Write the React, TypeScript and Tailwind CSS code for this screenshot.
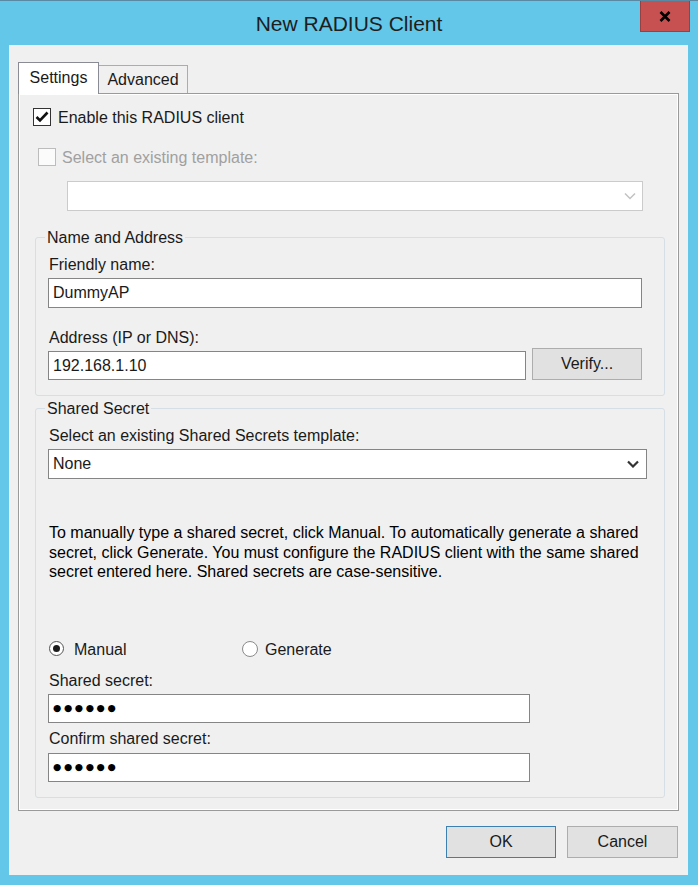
import type { ReactNode } from "react";

function Chevron({ color, bold }: { color: string; bold?: boolean }) {
  return (
    <svg width="12" height="8" viewBox="0 0 12 8">
      <path d="M1 1.5 L6 6.5 L11 1.5" fill="none" stroke={color} strokeWidth={bold ? 2.2 : 1.5} />
    </svg>
  );
}

function TextBox({ value, w, h = "h-[29px]" }: { value?: ReactNode; w: string; h?: string }) {
  return (
    <div className={`${w} ${h} bg-white border border-[#858585] flex items-center pl-[4px]`}>{value}</div>
  );
}

function Label({ children, mt }: { children: ReactNode; mt: string }) {
  return <div className={`${mt} h-[20px] leading-[20px] pl-[1px] pt-[1px]`}>{children}</div>;
}

function Dots() {
  return (
    <span className="font-['DejaVu_Sans',sans-serif] text-[9.5px] tracking-[2.6px] text-black">●●●●●●</span>
  );
}

function Group({ title, mt, children }: { title: string; mt: string; children: ReactNode }) {
  return (
    <fieldset className={`${mt} ml-[16px] mr-[13px] border border-[#d5dfe5] rounded-[3px] pl-[12px] pb-[15px]`}>
      <legend className="-ml-[3px] px-[2px] h-[20px] leading-[20px] pt-[1px]">{title}</legend>
      {children}
    </fieldset>
  );
}

function Button({ children, focused, w, h }: { children: ReactNode; focused?: boolean; w: string; h: string }) {
  return (
    <div
      className={`${w} ${h} bg-[#e1e1e1] border flex items-center justify-center ${
        focused ? "border-[#3c7fb1]" : "border-[#adadad]"
      }`}
    >
      {children}
    </div>
  );
}

export default function App() {
  return (
    <div className="w-[698px] h-[885px] bg-[#63c7e9] border-t border-[#5a8aa3] flex flex-col font-['Liberation_Sans',Arial,sans-serif] text-[16px] text-[#1a1a1a]">
      {/* title bar */}
      <div className="relative h-[44px] flex items-center justify-center">
        <span className="text-[21px] text-[#1e1e1e] leading-none">New RADIUS Client</span>
        <div className="absolute top-0 right-[8px] w-[50px] h-[31px] bg-[#c75050] border border-t-0 border-[#9b3f3f] flex items-center justify-center">
          <svg width="12" height="11" viewBox="0 0 12 11">
            <path d="M1.5 1 L10.5 10 M10.5 1 L1.5 10" stroke="#000" strokeWidth="2.6" />
          </svg>
        </div>
      </div>

      {/* client area */}
      <div className="ml-[9px] mr-[10px] h-[830px] bg-[#f0f0f0] flex flex-col">
        {/* tabs */}
        <div className="mt-[17px] ml-[9px] h-[32px] -mb-px flex items-end relative z-10">
          <div className="w-[81px] h-[32px] bg-white border border-b-0 border-[#898c95] flex items-center justify-center pb-[2px]">
            Settings
          </div>
          <div className="w-[89px] h-[28px] mb-[1px] bg-[#f0f0f0] border border-l-0 border-b-0 border-[#acacac] flex items-center justify-center pt-[1px]">
            Advanced
          </div>
        </div>

        {/* tab page */}
        <div className="ml-[9px] mr-[9px] h-[718px] border border-[#9a9a9a] shadow-[inset_1px_1px_0_#fff,inset_-1px_-1px_0_#fff] flex flex-col">
          <div className="mt-[14px] ml-[14px] h-[18px] flex items-center gap-[7px]">
            <div className="w-[18px] h-[18px] border border-[#333] bg-white flex items-center justify-center">
              <svg width="14" height="12" viewBox="0 0 14 12">
                <path d="M1.5 6 L5 9.5 L12.5 1.5" fill="none" stroke="#111" strokeWidth="2.6" />
              </svg>
            </div>
            <span className="pt-[2px]">Enable this RADIUS client</span>
          </div>

          <div className="mt-[22px] ml-[19px] h-[18px] flex items-center gap-[6px] text-[#a0a0a0]">
            <div className="w-[18px] h-[18px] border border-[#bcbcbc] bg-[#fbfbfb]" />
            <span className="pt-[2px]">Select an existing template:</span>
          </div>

          <div className="mt-[15px] ml-[48px] w-[576px] h-[30px] bg-white border border-[#cbcbcb] flex items-center justify-end pr-[6px]">
            <Chevron color="#c2c2c2" />
          </div>

          <Group title="Name and Address" mt="mt-[16px]">
            <Label mt="mt-[7px]">Friendly name:</Label>
            <div className="mt-[4px]">
              <TextBox value="DummyAP" w="w-[594px]" h="h-[30px]" />
            </div>
            <Label mt="mt-[19px]">Address (IP or DNS):</Label>
            <div className="mt-[1px] h-[32px] flex items-end gap-[6px]">
              <TextBox value="192.168.1.10" w="w-[478px]" />
              <Button w="w-[110px]" h="h-[32px]">
                Verify...
              </Button>
            </div>
          </Group>

          <Group title="Shared Secret" mt="mt-[2px]">
            <Label mt="mt-[7px]">Select an existing Shared Secrets template:</Label>
            <div className="mt-[4px] w-[599px] h-[30px] bg-white border border-[#858585] flex items-center justify-between pl-[4px] pr-[7px]">
              <span>None</span>
              <Chevron color="#333" bold />
            </div>
            <p className="mt-[44px] leading-[19.5px] text-black pl-[1px]">
              To manually type a shared secret, click Manual. To automatically generate a shared
              <br />
              secret, click Generate. You must configure the RADIUS client with the same shared
              <br />
              secret entered here. Shared secrets are case-sensitive.
            </p>
            <div className="mt-[57px] h-[20px] ml-[1px] flex items-center">
              <div className="w-[193px] flex items-center gap-[10px]">
                <div className="w-[15px] h-[15px] rounded-full border border-[#555] bg-white flex items-center justify-center">
                  <div className="w-[7px] h-[7px] rounded-full bg-[#1c1c1c]" />
                </div>
                <span className="pt-[2px]">Manual</span>
              </div>
              <div className="flex items-center gap-[7px]">
                <div className="w-[16px] h-[16px] rounded-full border border-[#8a8a8a] bg-white" />
                <span className="pt-[2px]">Generate</span>
              </div>
            </div>
            <Label mt="mt-[11px]">Shared secret:</Label>
            <div className="mt-[4px]">
              <TextBox value={<Dots />} w="w-[482px]" />
            </div>
            <Label mt="mt-[5px]">Confirm shared secret:</Label>
            <div className="mt-[5px]">
              <TextBox value={<Dots />} w="w-[482px]" />
            </div>
          </Group>
        </div>

        {/* dialog buttons */}
        <div className="mt-[15px] mr-[10px] flex justify-end gap-[11px]">
          <Button w="w-[110px]" h="h-[32px]" focused>
            OK
          </Button>
          <Button w="w-[111px]" h="h-[32px]">
            Cancel
          </Button>
        </div>
      </div>
    </div>
  );
}
